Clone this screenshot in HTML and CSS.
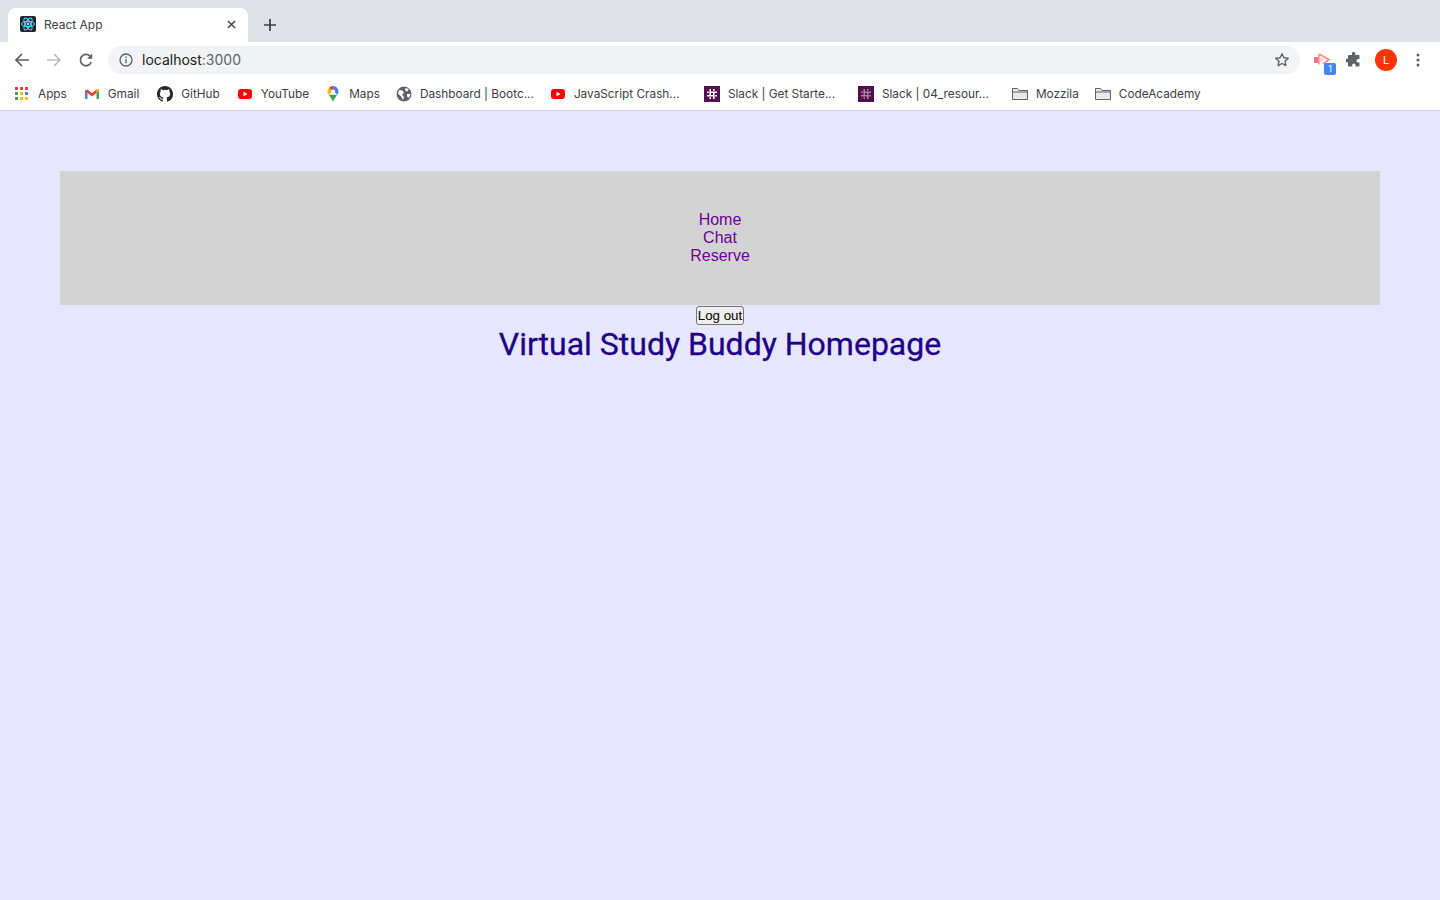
FILE: index.html
```html
<!DOCTYPE html>
<html lang="en">
<head>
<meta charset="utf-8">
<title>React App</title>
<link rel="stylesheet" href="styles.css">
</head>
<body>
<div class="browser">
  <div class="tabstrip">
    <div class="tab">
      <svg class="favicon" viewBox="0 0 16 16"><rect width="16" height="16" rx="2" fill="#20232a"/><g fill="none" stroke="#61dafb" stroke-width="1"><ellipse cx="8" cy="8" rx="6.6" ry="2.6"/><ellipse cx="8" cy="8" rx="6.6" ry="2.6" transform="rotate(60 8 8)"/><ellipse cx="8" cy="8" rx="6.6" ry="2.6" transform="rotate(120 8 8)"/></g><circle cx="8" cy="8" r="1.4" fill="#61dafb"/></svg>
      <span class="tab-title">React App</span>
      <svg class="tab-close" viewBox="0 0 10 10"><path d="M1 1l8 8M9 1l-8 8" stroke="#3c4043" stroke-width="1.5" fill="none"/></svg>
    </div>
    <svg class="new-tab" viewBox="0 0 12 12"><path d="M6 0v12M0 6h12" stroke="#3c4043" stroke-width="1.7" fill="none"/></svg>
  </div>
  <div class="toolbar">
    <svg class="nav-icon" viewBox="0 0 16 16"><path d="M15 8H2M8 2L2 8l6 6" stroke="#5f6368" stroke-width="1.7" fill="none"/></svg>
    <svg class="nav-icon" viewBox="0 0 16 16"><path d="M1 8h13M8 2l6 6-6 6" stroke="#b8babd" stroke-width="1.7" fill="none"/></svg>
    <svg class="nav-icon" viewBox="0 0 16 16"><path d="M13.2 10.2A5.6 5.6 0 1 1 12 4.1" stroke="#5f6368" stroke-width="1.7" fill="none"/><path d="M14.2 1.6v5.2H9z" fill="#5f6368"/></svg>
    <div class="omnibox">
      <svg class="info" viewBox="0 0 14 14"><circle cx="7" cy="7" r="6" stroke="#5f6368" stroke-width="1.3" fill="none"/><path d="M7 6.2v4M7 3.6v1.4" stroke="#5f6368" stroke-width="1.4"/></svg>
      <span class="url">localhost<span class="url-port">:3000</span></span>
      <svg class="star" viewBox="0 0 16 16"><path d="M8 1.800l1.900 4 4.400.5-3.300 3 .9 4.400L8 11.500l-3.900 2.200.9-4.400-3.300-3 4.400-.5z" stroke="#5f6368" stroke-width="1.400" fill="none" stroke-linejoin="round"/></svg>
    </div>
    <div class="actions">
      <div class="ext">
        <svg class="ext-icon" viewBox="0 0 18 14"><path d="M1 4h5.500v6H1z" fill="#fa7a80"/><path d="M6 1l10 5.500L10 11" stroke="#fb8d92" stroke-width="1.800" fill="none"/><path d="M6 1.500v10" stroke="#fb8d92" stroke-width="1.500"/><path d="M6.500 3.500L13 6.500 6.500 9z" fill="#fdd3d5"/></svg>
        <span class="ext-badge">1</span>
      </div>
      <svg class="puzzle" viewBox="0 0 16 16"><path d="M6 1.500a1.600 1.600 0 0 1 3.200 0V3h3.300a1 1 0 0 1 1 1v3h-1.300a1.700 1.700 0 0 0 0 3.400h1.300v3.100a1 1 0 0 1-1 1H9.600v-1.200a1.700 1.700 0 0 0-3.400 0v1.200H3a1 1 0 0 1-1-1v-3.300H.9a1.700 1.700 0 0 1 0-3.400H2V4a1 1 0 0 1 1-1h3z" fill="#5f6368"/></svg>
      <span class="avatar">L</span>
      <svg class="kebab" viewBox="0 0 4 14"><circle cx="2" cy="2" r="1.500" fill="#5f6368"/><circle cx="2" cy="7" r="1.500" fill="#5f6368"/><circle cx="2" cy="12" r="1.500" fill="#5f6368"/></svg>
    </div>
  </div>
  <div class="bookmarks">
    <a class="bm"><svg class="bm-icon" viewBox="0 0 16 16"><rect x="1" y="1" width="3" height="3" fill="#ea4335"/><rect x="6" y="1" width="3" height="3" fill="#ea4335"/><rect x="11" y="1" width="3" height="3" fill="#ea4335"/><rect x="1" y="6" width="3" height="3" fill="#34a853"/><rect x="6" y="6" width="3" height="3" fill="#fbbc04"/><rect x="11" y="6" width="3" height="3" fill="#4285f4"/><rect x="1" y="11" width="3" height="3" fill="#34a853"/><rect x="6" y="11" width="3" height="3" fill="#fbbc04"/><rect x="11" y="11" width="3" height="3" fill="#fbbc04"/></svg>Apps</a>
    <a class="bm bm-loose"><svg class="bm-icon" viewBox="0 0 16 16"><path d="M1 13V4.500l2.500-.5V13z" fill="#4285f4"/><path d="M12.500 13V4l2.500.5V13z" fill="#34a853"/><path d="M1 5l2.500-1.500L8 7l4.500-3.500L15 5l-7 5.500z" fill="#ea4335"/><path d="M12.500 3.500L15 3v2l-2.500 2z" fill="#fbbc04"/></svg>Gmail</a>
    <a class="bm"><svg class="bm-icon" viewBox="0 0 16 16"><path fill="#24292e" d="M8 0C3.580 0 0 3.580 0 8c0 3.540 2.290 6.530 5.470 7.590.4.070.55-.17.55-.38 0-.19-.01-.82-.01-1.490-2.010.37-2.530-.49-2.690-.94-.09-.23-.48-.94-.82-1.130-.28-.15-.68-.52-.01-.53.630-.01 1.080.58 1.230.82.720 1.210 1.870.87 2.330.66.070-.52.280-.87.510-1.070-1.780-.2-3.640-.89-3.640-3.950 0-.87.310-1.590.82-2.150-.08-.2-.36-1.020.08-2.120 0 0 .67-.21 2.200.82a7.400 7.400 0 0 1 4 0c1.530-1.040 2.200-.82 2.200-.82.440 1.100.16 1.920.08 2.120.51.56.82 1.270.82 2.150 0 3.070-1.870 3.750-3.650 3.950.29.250.54.730.54 1.480 0 1.070-.01 1.930-.01 2.200 0 .21.150.460.550.380A8.010 8.010 0 0 0 16 8c0-4.420-3.580-8-8-8z"/></svg>GitHub</a>
    <a class="bm bm-tight"><svg class="bm-icon" viewBox="0 0 16 16"><rect x="1" y="3" width="14" height="10" rx="3" fill="#f00"/><path d="M6.500 5.700v4.600L10.500 8z" fill="#fff"/></svg>YouTube</a>
    <a class="bm bm-tight"><svg class="bm-icon" viewBox="0 0 16 16"><path d="M8 0a5.500 5.500 0 0 1 4.400 8.800L8 4.500z" fill="#4285f4"/><path d="M8 0a5.500 5.500 0 0 0-4.200 2L8 6z" fill="#ea4335"/><path d="M3.800 2A5.500 5.500 0 0 0 3.600 8.800L8 5z" fill="#fbbc04"/><path d="M3.600 8.800L12.400 8.800C10.500 11.500 9 13 8 16 7 13 5.500 11.500 3.600 8.800z" fill="#34a853"/><circle cx="8" cy="5.500" r="2" fill="#fff"/></svg>Maps</a>
    <a class="bm bm-fixed"><svg class="bm-icon" viewBox="0 0 16 16"><circle cx="8" cy="8" r="7.500" fill="#5f6368"/><path d="M3 4l3.500.5L8 7 6 8.500l2 2.500-1 3-2-3.500L2 7.500zM9.500 2l3 1-1 2.500-2.500-1zM11 8h3.500l-1.500 4-2-1.500z" fill="#fff"/></svg>Dashboard | Bootc...</a>
    <a class="bm bm-fixed"><svg class="bm-icon" viewBox="0 0 16 16"><rect x="1" y="3" width="14" height="10" rx="3" fill="#f00"/><path d="M6.500 5.700v4.600L10.500 8z" fill="#fff"/></svg>JavaScript Crash...</a>
    <a class="bm bm-fixed"><svg class="bm-icon" viewBox="0 0 16 16"><rect width="16" height="16" fill="#510f4e"/><path d="M6.200 3v6.500M9.800 6.500V13M3 9.800h6.500M6.500 6.200H13M9.800 3v1.800M6.200 11.200V13M3 6.200h1.800M11.200 9.800H13" stroke="#fff" stroke-width="1.600" fill="none"/></svg>Slack | Get Starte...</a>
    <a class="bm bm-fixed"><svg class="bm-icon" viewBox="0 0 16 16"><rect width="16" height="16" fill="#510f4e"/><path d="M6.200 3v6.500M9.800 6.500V13M3 9.800h6.500M6.500 6.200H13M9.800 3v1.800M6.200 11.200V13M3 6.200h1.800M11.200 9.800H13" stroke="#a883a6" stroke-width="1.600" fill="none"/></svg>Slack | 04_resour...</a>
    <a class="bm bm-tight"><svg class="bm-icon" viewBox="0 0 16 16"><path d="M.5 13.500v-11h5l1.500 2h8.500v9z" fill="#e8e8e8" stroke="#5f6368"/><path d="M.5 6h15" stroke="#5f6368"/></svg>Mozzila</a>
    <a class="bm"><svg class="bm-icon" viewBox="0 0 16 16"><path d="M.5 13.500v-11h5l1.500 2h8.500v9z" fill="#e8e8e8" stroke="#5f6368"/><path d="M.5 6h15" stroke="#5f6368"/></svg>CodeAcademy</a>
  </div>
</div>
<main class="page">
  <nav class="nav-panel">
    <a class="nav-link">Home</a>
    <a class="nav-link">Chat</a>
    <a class="nav-link">Reserve</a>
  </nav>
  <button class="logout" type="button">Log out</button>
  <h1 class="title">Virtual Study Buddy Homepage</h1>
</main>
</body>
</html>
```
FILE: styles.css
```css
* { box-sizing: border-box; }
html, body { margin: 0; height: 100%; }
body {
  display: flex;
  flex-direction: column;
  height: 900px;
  overflow: hidden;
  background: #e6e6ff;
  font-family: "Liberation Sans", Arial, sans-serif;
}
svg { display: block; flex: none; }

.browser { background: #fff; border-bottom: 1px solid #d3d5db; height: 111px; flex: none; }

.tabstrip {
  height: 42px;
  background: #dee1e7;
  display: flex;
  align-items: flex-end;
  padding-left: 8px;
}
.tab {
  width: 240px;
  height: 34px;
  background: #fff;
  border-radius: 8px 8px 0 0;
  display: flex;
  align-items: center;
  padding: 0 12px 2px 12px;
}
.favicon { width: 16px; height: 16px; }
.tab-title {
  margin-left: 8px;
  flex: 1;
  font: 12px Inter, "Liberation Sans", sans-serif;
  color: #3c4043;
}
.tab-close { width: 9px; height: 9px; }
.new-tab { width: 12px; height: 12px; margin: 0 0 11px 16px; }

.toolbar {
  height: 36px;
  display: flex;
  align-items: center;
  padding: 0 0 0 14px;
}
.nav-icon { width: 16px; height: 16px; margin-right: 16px; }
.omnibox {
  flex: none;
  width: 1192px;
  height: 28px;
  margin-left: -2px;
  background: #f1f3f4;
  border-radius: 14px;
  display: flex;
  align-items: center;
  padding: 0 10px 0 11px;
}
.info { width: 14px; height: 14px; }
.url {
  margin-left: 9px;
  flex: 1;
  padding-bottom: 1px;
  font: 14px/17px Inter, "Liberation Sans", sans-serif;
  color: #202124;
}
.url-port { color: #5f6368; }
.star { width: 16px; height: 16px; }

.actions {
  flex: 1;
  display: flex;
  align-items: center;
  padding-left: 13px;
}
.ext { position: relative; width: 18px; height: 14px; }
.ext-icon { width: 18px; height: 14px; }
.ext-badge {
  position: absolute;
  left: 11px;
  top: 10px;
  width: 12px;
  height: 12px;
  border-radius: 2px;
  background: #4285f4;
  color: #fff;
  font: 9px/12px Inter, "Liberation Sans", sans-serif;
  text-align: center;
}
.puzzle { width: 16px; height: 16px; margin-left: 15px; }
.avatar {
  width: 22px;
  height: 22px;
  margin-left: 13px;
  border-radius: 50%;
  background: #fa3500;
  color: #fff;
  font: 11px/22px Inter, "Liberation Sans", sans-serif;
  text-align: center;
}
.kebab { width: 4px; height: 14px; margin-left: 19px; }

.bookmarks {
  height: 32px;
  display: flex;
  align-items: center;
  padding: 0 0 0 14px;
  font: 11.8px Inter, "Liberation Sans", sans-serif;
  color: #3c4043;
  white-space: nowrap;
  gap: 17px;
}
.bm { display: flex; align-items: center; gap: 8px; }
.bm-icon { width: 16px; height: 16px; }
.bm-fixed { width: 137px; }
.bm-loose { margin-right: 1px; }
.bm-tight { margin-right: -1px; }

.page {
  flex: 1;
  padding: 60px 60px 0;
  text-align: center;
}
.nav-panel {
  height: 134px;
  padding: 40px 0;
  background: #d3d3d3;
  font-size: 16px;
  line-height: 18px;
}
.nav-link { display: block; color: #6a0099; }
.logout {
  display: block;
  width: 48px;
  height: 19px;
  margin: 1px auto 0;
  padding: 0;
  font: 13.333px "Liberation Sans", Arial, sans-serif;
  color: #000;
  background: #efefef;
  border: 1px solid #767676;
  border-radius: 3px;
}
.title {
  margin: 0;
  font: 400 32px/38px Roboto, sans-serif;
  color: #1f0087;
  -webkit-text-stroke: 0.3px #1f0087;
}
```
